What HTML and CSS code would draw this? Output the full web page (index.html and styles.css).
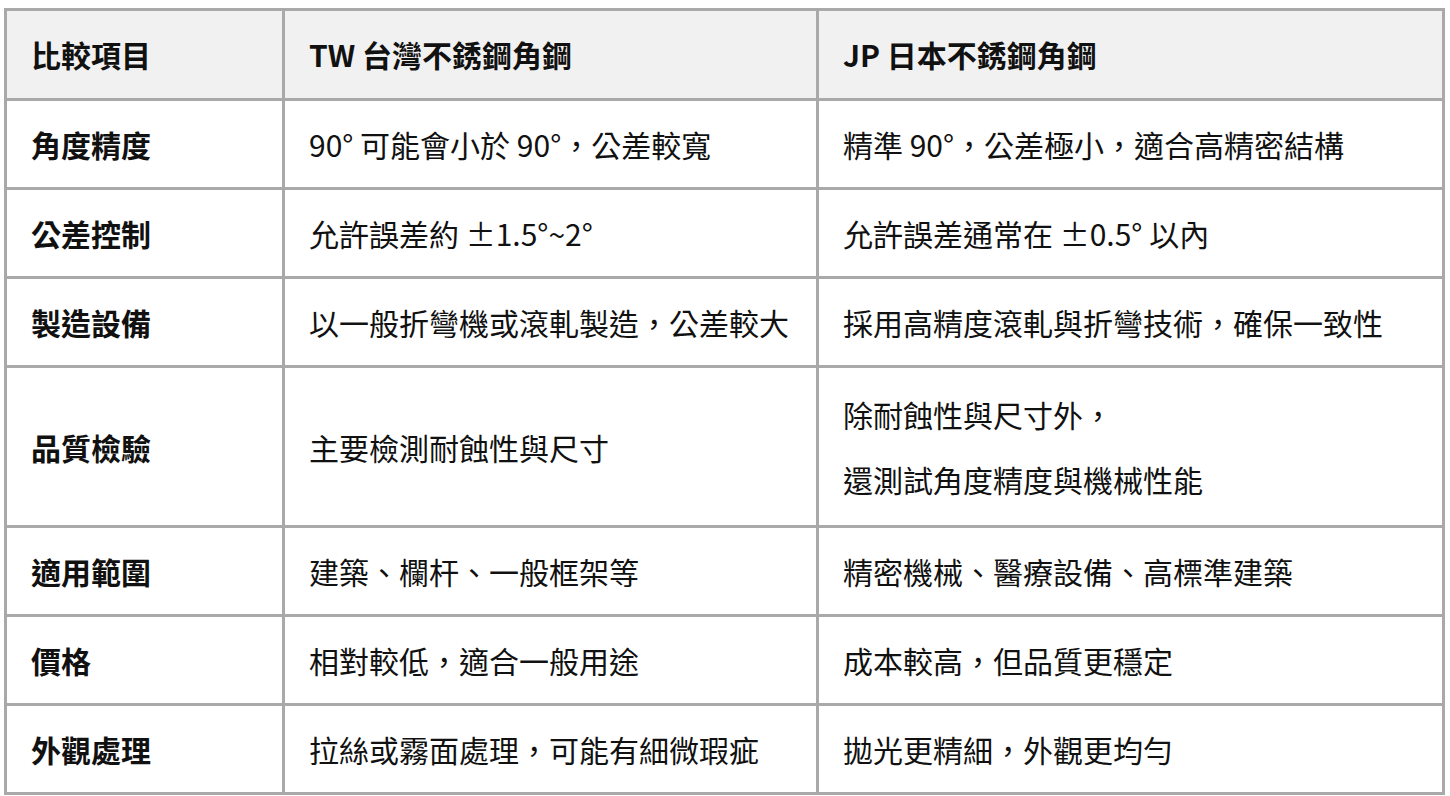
FILE: index.html
```html
<!DOCTYPE html>
<html lang="zh-Hant">
<head>
<meta charset="utf-8">
<title>台灣與日本不銹鋼角鋼比較</title>
<link rel="stylesheet" href="styles.css">
</head>
<body>
<div class="page">
  <table class="compare">
    <colgroup>
      <col class="c1">
      <col class="c2">
      <col class="c3">
    </colgroup>
    <thead>
      <tr>
        <th>比較項目</th>
        <th>TW 台灣不銹鋼角鋼</th>
        <th>JP 日本不銹鋼角鋼</th>
      </tr>
    </thead>
    <tbody>
      <tr>
        <th>角度精度</th>
        <td>90° 可能會小於 90°，公差較寬</td>
        <td>精準 90°，公差極小，適合高精密結構</td>
      </tr>
      <tr>
        <th>公差控制</th>
        <td>允許誤差約 ±1.5°~2°</td>
        <td>允許誤差通常在 ±0.5° 以內</td>
      </tr>
      <tr>
        <th>製造設備</th>
        <td>以一般折彎機或滾軋製造，公差較大</td>
        <td>採用高精度滾軋與折彎技術，確保一致性</td>
      </tr>
      <tr>
        <th>品質檢驗</th>
        <td>主要檢測耐蝕性與尺寸</td>
        <td>
          <div class="lines">
            <p>除耐蝕性與尺寸外，</p>
            <p>還測試角度精度與機械性能</p>
          </div>
        </td>
      </tr>
      <tr>
        <th>適用範圍</th>
        <td>建築、欄杆、一般框架等</td>
        <td>精密機械、醫療設備、高標準建築</td>
      </tr>
      <tr>
        <th>價格</th>
        <td>相對較低，適合一般用途</td>
        <td>成本較高，但品質更穩定</td>
      </tr>
      <tr>
        <th>外觀處理</th>
        <td>拉絲或霧面處理，可能有細微瑕疵</td>
        <td>拋光更精細，外觀更均勻</td>
      </tr>
    </tbody>
  </table>
</div>
</body>
</html>
```

FILE: styles.css
```css
html, body {
  margin: 0;
  padding: 0;
  background: #ffffff;
}

body {
  font-family: "Noto Sans CJK TC", "Noto Sans", sans-serif;
  color: #111111;
}

.page {
  padding: 8px 5px 0 4px;
}

.compare {
  width: 1441px;
  table-layout: fixed;
  border-collapse: separate;
  border-spacing: 0;
  border-top: 3px solid #a9a9a9;
  border-left: 3px solid #a9a9a9;
}

.c1 { width: 278px; }
.c2 { width: 534px; }
.c3 { width: 626px; }

.compare th,
.compare td {
  border-right: 3px solid #a9a9a9;
  border-bottom: 3px solid #a9a9a9;
  padding: 21px 20px 21px 24px;
  font-size: 30px;
  line-height: 44px;
  text-align: left;
  vertical-align: middle;
  white-space: nowrap;
}

.compare th {
  font-weight: 700;
}

.compare td {
  font-weight: 400;
}

.compare thead th {
  background: #f1f1f1;
  padding-top: 21px;
  padding-bottom: 22px;
}

.lines {
  display: flex;
  flex-direction: column;
  gap: 21px;
  padding: 3px 0;
}

.lines p {
  margin: 0;
}
```
